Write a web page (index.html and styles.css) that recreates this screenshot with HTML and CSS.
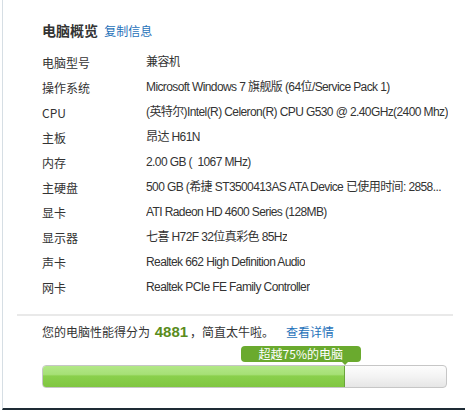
FILE: index.html
```html
<!DOCTYPE html>
<html lang="zh-CN">
<head>
    <meta charset="UTF-8">
    <title>电脑概览</title>
    <link rel="stylesheet" href="styles.css">
</head>
<body>
    <div class="panel">
        <div class="overview">
            <h2 class="title">电脑概览 <a href="#" class="link">复制信息</a></h2>
            <ul class="info-list">
                <li><span class="label">电脑型号</span><span class="value">兼容机</span></li>
                <li><span class="label">操作系统</span><span class="value">Microsoft Windows 7 旗舰版 (64位/Service Pack 1)</span></li>
                <li><span class="label">CPU</span><span class="value">(英特尔)Intel(R) Celeron(R) CPU G530 @ 2.40GHz(2400 Mhz)</span></li>
                <li><span class="label">主板</span><span class="value">昂达 H61N</span></li>
                <li><span class="label">内存</span><span class="value">2.00 GB (&nbsp; 1067 MHz)</span></li>
                <li><span class="label">主硬盘</span><span class="value">500 GB (希捷 ST3500413AS ATA Device 已使用时间: 2858...</span></li>
                <li><span class="label">显卡</span><span class="value">ATI Radeon HD 4600 Series (128MB)</span></li>
                <li><span class="label">显示器</span><span class="value">七喜 H72F 32位真彩色 85Hz</span></li>
                <li><span class="label">声卡</span><span class="value">Realtek 662 High Definition Audio</span></li>
                <li><span class="label">网卡</span><span class="value">Realtek PCIe FE Family Controller</span></li>
            </ul>
        </div>

        <div class="score" style="--pct: 75%;">
            <p class="score-text">您的电脑性能得分为 <b class="score-num">4881</b>，简直太牛啦。<a href="#" class="link detail-link">查看详情</a></p>
            <div class="rank-tip">超越75%的电脑</div>
            <div class="bar">
                <div class="bar-fill"></div>
            </div>
        </div>
    </div>
</body>
</html>
```

FILE: styles.css
```css
* {
    margin: 0;
    padding: 0;
    box-sizing: border-box;
}

body {
    font-family: "Noto Sans CJK SC", "Liberation Sans", sans-serif;
    font-size: 12px;
    color: #333;
    background: #fff;
}

.panel {
    height: 410px;
    margin-left: 2px;
    padding: 20px 12px 0 14px;
    border-left: 1px solid #d6dee4;
    border-bottom: 2px solid #1e2b35;
}

.overview {
    padding-left: 25px;
    border-bottom: 2px solid #e9e9e9;
    padding-bottom: 14px;
}

.title {
    font-size: 14px;
    line-height: 20px;
    font-weight: bold;
    color: #333;
    margin-bottom: 9px;
}

.link {
    color: #1f72ba;
    text-decoration: none;
    font-weight: normal;
    font-size: 12px;
    margin-left: 3px;
}

.info-list {
    list-style: none;
}

.info-list li {
    display: flex;
    line-height: 25px;
    height: 25px;
}

.label {
    width: 104px;
    flex-shrink: 0;
}

.value {
    font-family: "Liberation Sans", "Noto Sans CJK SC", sans-serif;
    letter-spacing: -0.6px;
    white-space: nowrap;
    overflow: hidden;
    text-overflow: ellipsis;
}

.score {
    padding: 6px 6px 0 25px;
}

.score-text {
    line-height: 20px;
}

.score-num {
    font-family: "Liberation Sans", sans-serif;
    font-size: 15px;
    color: #5a8c1c;
    margin: 0 2px;
}

.detail-link {
    margin-left: 12px;
}

.rank-tip {
    position: relative;
    width: 120px;
    height: 16px;
    margin-top: 4px;
    margin-left: calc(var(--pct) - 105px);
    background: #6aaa2e;
    border-radius: 4px;
    color: #fff;
    font-size: 12px;
    line-height: 16px;
    text-align: center;
}

.rank-tip::after {
    content: "";
    position: absolute;
    right: 13px;
    bottom: -3px;
    border-left: 3px solid transparent;
    border-right: 3px solid transparent;
    border-top: 3px solid #6aaa2e;
}

.bar {
    height: 23px;
    margin-top: 3px;
    border: 1px solid #c6c6c6;
    border-radius: 4px;
    background: linear-gradient(to bottom, #fdfdfd 0%, #f3f3f3 50%, #e6e6e6 100%);
    overflow: hidden;
}

.bar-fill {
    width: var(--pct);
    height: 100%;
    border-right: 1px solid #6aa53a;
    background: linear-gradient(to bottom, #b2e887 0%, #a6e076 40%, #8ad04c 48%, #80c641 100%);
}
```
